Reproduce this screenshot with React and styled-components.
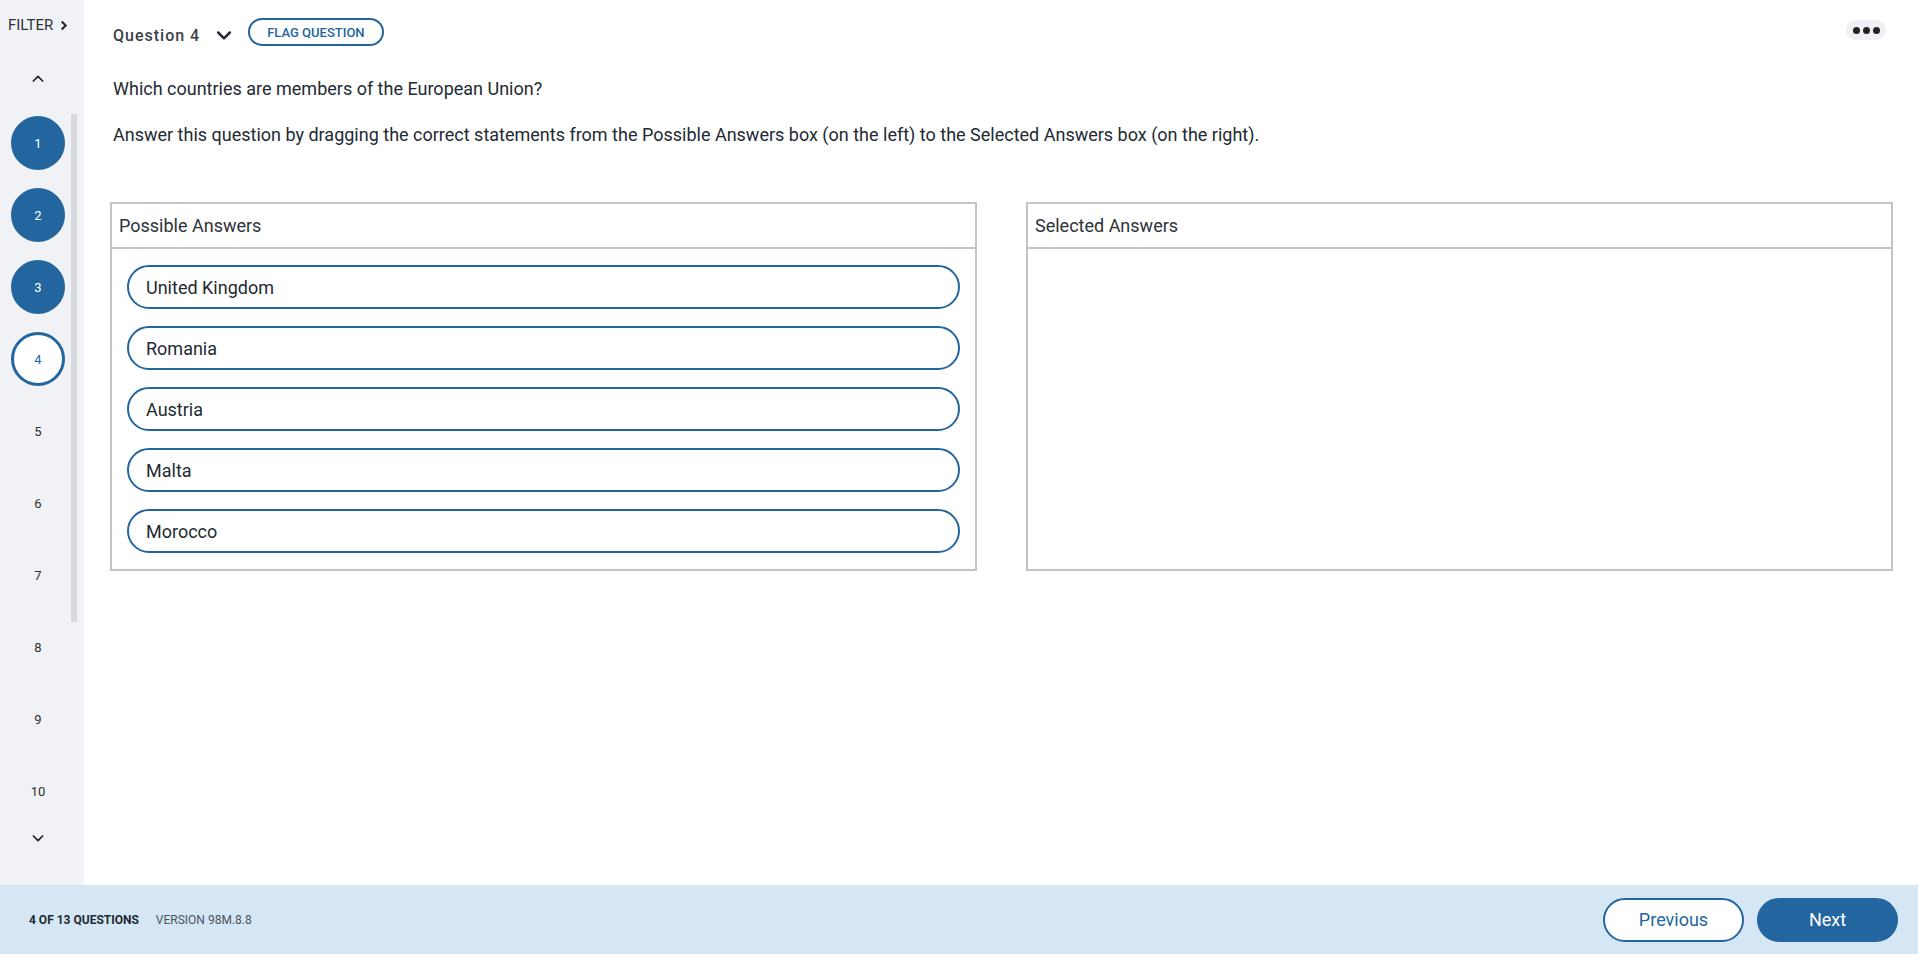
import React from 'react';
import styled, { createGlobalStyle } from 'styled-components';

const Global = createGlobalStyle`
  body { margin: 0; font-family: Roboto, "Liberation Sans", sans-serif; color: #222a33; background: #fff; }
  * { box-sizing: border-box; }
`;

const BLUE = '#23669f';

const Page = styled.div`
  display: grid;
  grid-template-columns: 84px 1fr;
  grid-template-rows: 885px 69px;
  height: 954px;
  overflow: hidden;
`;

const Sidebar = styled.aside`
  background: #f0f2f5;
  display: flex;
  flex-direction: column;
  position: relative;
`;

const Filter = styled.div`
  font-size: 15px;
  color: #2c333b;
  padding-left: 8px;
  height: 50px;
  display: flex;
  align-items: center;
  gap: 6px;
`;

const Chevron = styled.div`
  width: 76px;
  height: ${(p) => p.h}px;
  display: flex;
  justify-content: center;
  align-items: center;
  color: #222;
`;

const Scroll = styled.div`
  position: absolute;
  left: 71px;
  top: 114px;
  width: 6px;
  height: 508px;
  background: #d6d9de;
`;

const Num = styled.div`
  width: 76px;
  height: 72px;
  display: flex;
  justify-content: center;
  align-items: center;
  font-size: 13px;
  color: #2b2f34;
`;

const Circle = styled.div`
  width: 54px;
  height: 54px;
  border-radius: 50%;
  display: flex;
  justify-content: center;
  align-items: center;
  background: ${(p) => (p.current ? '#fff' : BLUE)};
  border: 3px solid ${BLUE};
  color: ${(p) => (p.current ? BLUE : '#fff')};
  font-size: 13px;
`;

const Main = styled.main`
  padding: 18px 25px 0 26px;
  position: relative;
`;

const TopBar = styled.div`
  display: flex;
  align-items: center;
  height: 28px;
`;

const QLabel = styled.span`
  font-size: 16px;
  font-weight: 500;
  letter-spacing: 1px;
  color: #3b4149;
  margin-top: 6px;
  padding-left: 3px;
`;

const Flag = styled.button`
  margin-left: 14px;
  height: 28px;
  padding: 0 17px;
  border: 2px solid ${BLUE};
  border-radius: 14px;
  background: #fff;
  color: ${BLUE};
  font-family: Roboto, sans-serif;
  font-weight: 500;
  font-size: 13px;
`;

const Dots = styled.div`
  margin-left: auto;
  width: 40px;
  height: 20px;
  border-radius: 10px;
  background: #eef0f3;
  display: flex;
  justify-content: center;
  align-items: center;
  gap: 3px;
  margin-right: 7px;
  margin-top: -4px;
  span { width: 7px; height: 7px; border-radius: 50%; background: #222; }
`;

const Text = styled.p`
  font-size: 18px;
  line-height: 22px;
  margin: ${(p) => p.m};
  padding-left: 3px;
  color: #222a33;
`;

const Boxes = styled.div`
  display: grid;
  grid-template-columns: 1fr 1fr;
  gap: 49px;
  margin-top: 56px;
`;

const Box = styled.section`
  border: 2px solid #c4c4c4;
  height: 369px;
`;

const BoxHead = styled.div`
  height: 45px;
  border-bottom: 2px solid #c4c4c4;
  padding-left: 7px;
  display: flex;
  align-items: center;
  font-size: 18px;
  color: #2c3239;
`;

const List = styled.div`
  padding: 16px 15px;
  display: flex;
  flex-direction: column;
  gap: 17px;
`;

const Pill = styled.div`
  height: 44px;
  border: 2px solid ${BLUE};
  border-radius: 22px;
  display: flex;
  align-items: center;
  padding-left: 17px;
  font-size: 18px;
  color: #222a33;
`;

const Footer = styled.footer`
  grid-column: 1 / 3;
  background: #d5e6f4;
  display: flex;
  align-items: center;
  padding: 0 20px 0 29px;
  font-size: 12px;
`;

const Count = styled.span`
  font-weight: 700;
  color: #222a33;
  margin-right: 17px;
`;

const Version = styled.span`
  color: #4a5560;
`;

const NavBtn = styled.button`
  width: 141px;
  height: 44px;
  border-radius: 22px;
  border: 2px solid ${BLUE};
  background: ${(p) => (p.primary ? BLUE : '#fff')};
  color: ${(p) => (p.primary ? '#fff' : BLUE)};
  font-family: Roboto, sans-serif;
  font-size: 18px;
  margin-left: ${(p) => (p.first ? 'auto' : '13px')};
`;

const DropIcon = styled.span`
  margin-left: 14px;
  margin-top: 6px;
  display: flex;
`;

const ChevronSvg = ({ up, size = 16, w = 2.5 }) => (
  <svg width={size} height={size} viewBox="0 0 24 24" fill="none" stroke="currentColor" strokeWidth={w} strokeLinecap="round" strokeLinejoin="round">
    <path d={up ? 'M5 15l7-7 7 7' : 'M5 9l7 7 7-7'} />
  </svg>
);

const answers = ['United Kingdom', 'Romania', 'Austria', 'Malta', 'Morocco'];

export default function App() {
  return (
    <Page>
      <Global />
      <Sidebar>
        <Filter>
          FILTER
          <svg width="9" height="11" viewBox="0 0 10 12" fill="none" stroke="#222" strokeWidth="2.2"><path d="M3 1.5l4.5 4.5L3 10.5" /></svg>
        </Filter>
        <Chevron h={57}><ChevronSvg up /></Chevron>
        <Scroll />
        {[1, 2, 3, 4, 5, 6, 7, 8, 9, 10].map((n) => (
          <Num key={n}>{n <= 4 ? <Circle current={n === 4}>{n}</Circle> : n}</Num>
        ))}
        <Chevron h={22}><ChevronSvg /></Chevron>
      </Sidebar>
      <Main>
        <TopBar>
          <QLabel>Question 4</QLabel>
          <DropIcon><ChevronSvg size={20} w={3} /></DropIcon>
          <Flag>FLAG QUESTION</Flag>
          <Dots><span /><span /><span /></Dots>
        </TopBar>
        <Text m="32px 0 0 0">Which countries are members of the European Union?</Text>
        <Text m="24px 0 0 0">Answer this question by dragging the correct statements from the Possible Answers box (on the left) to the Selected Answers box (on the right).</Text>
        <Boxes>
          <Box>
            <BoxHead>Possible Answers</BoxHead>
            <List>{answers.map((a) => <Pill key={a}>{a}</Pill>)}</List>
          </Box>
          <Box>
            <BoxHead>Selected Answers</BoxHead>
          </Box>
        </Boxes>
      </Main>
      <Footer>
        <Count>4 OF 13 QUESTIONS</Count>
        <Version>VERSION 98M.8.8</Version>
        <NavBtn first>Previous</NavBtn>
        <NavBtn primary>Next</NavBtn>
      </Footer>
    </Page>
  );
}
